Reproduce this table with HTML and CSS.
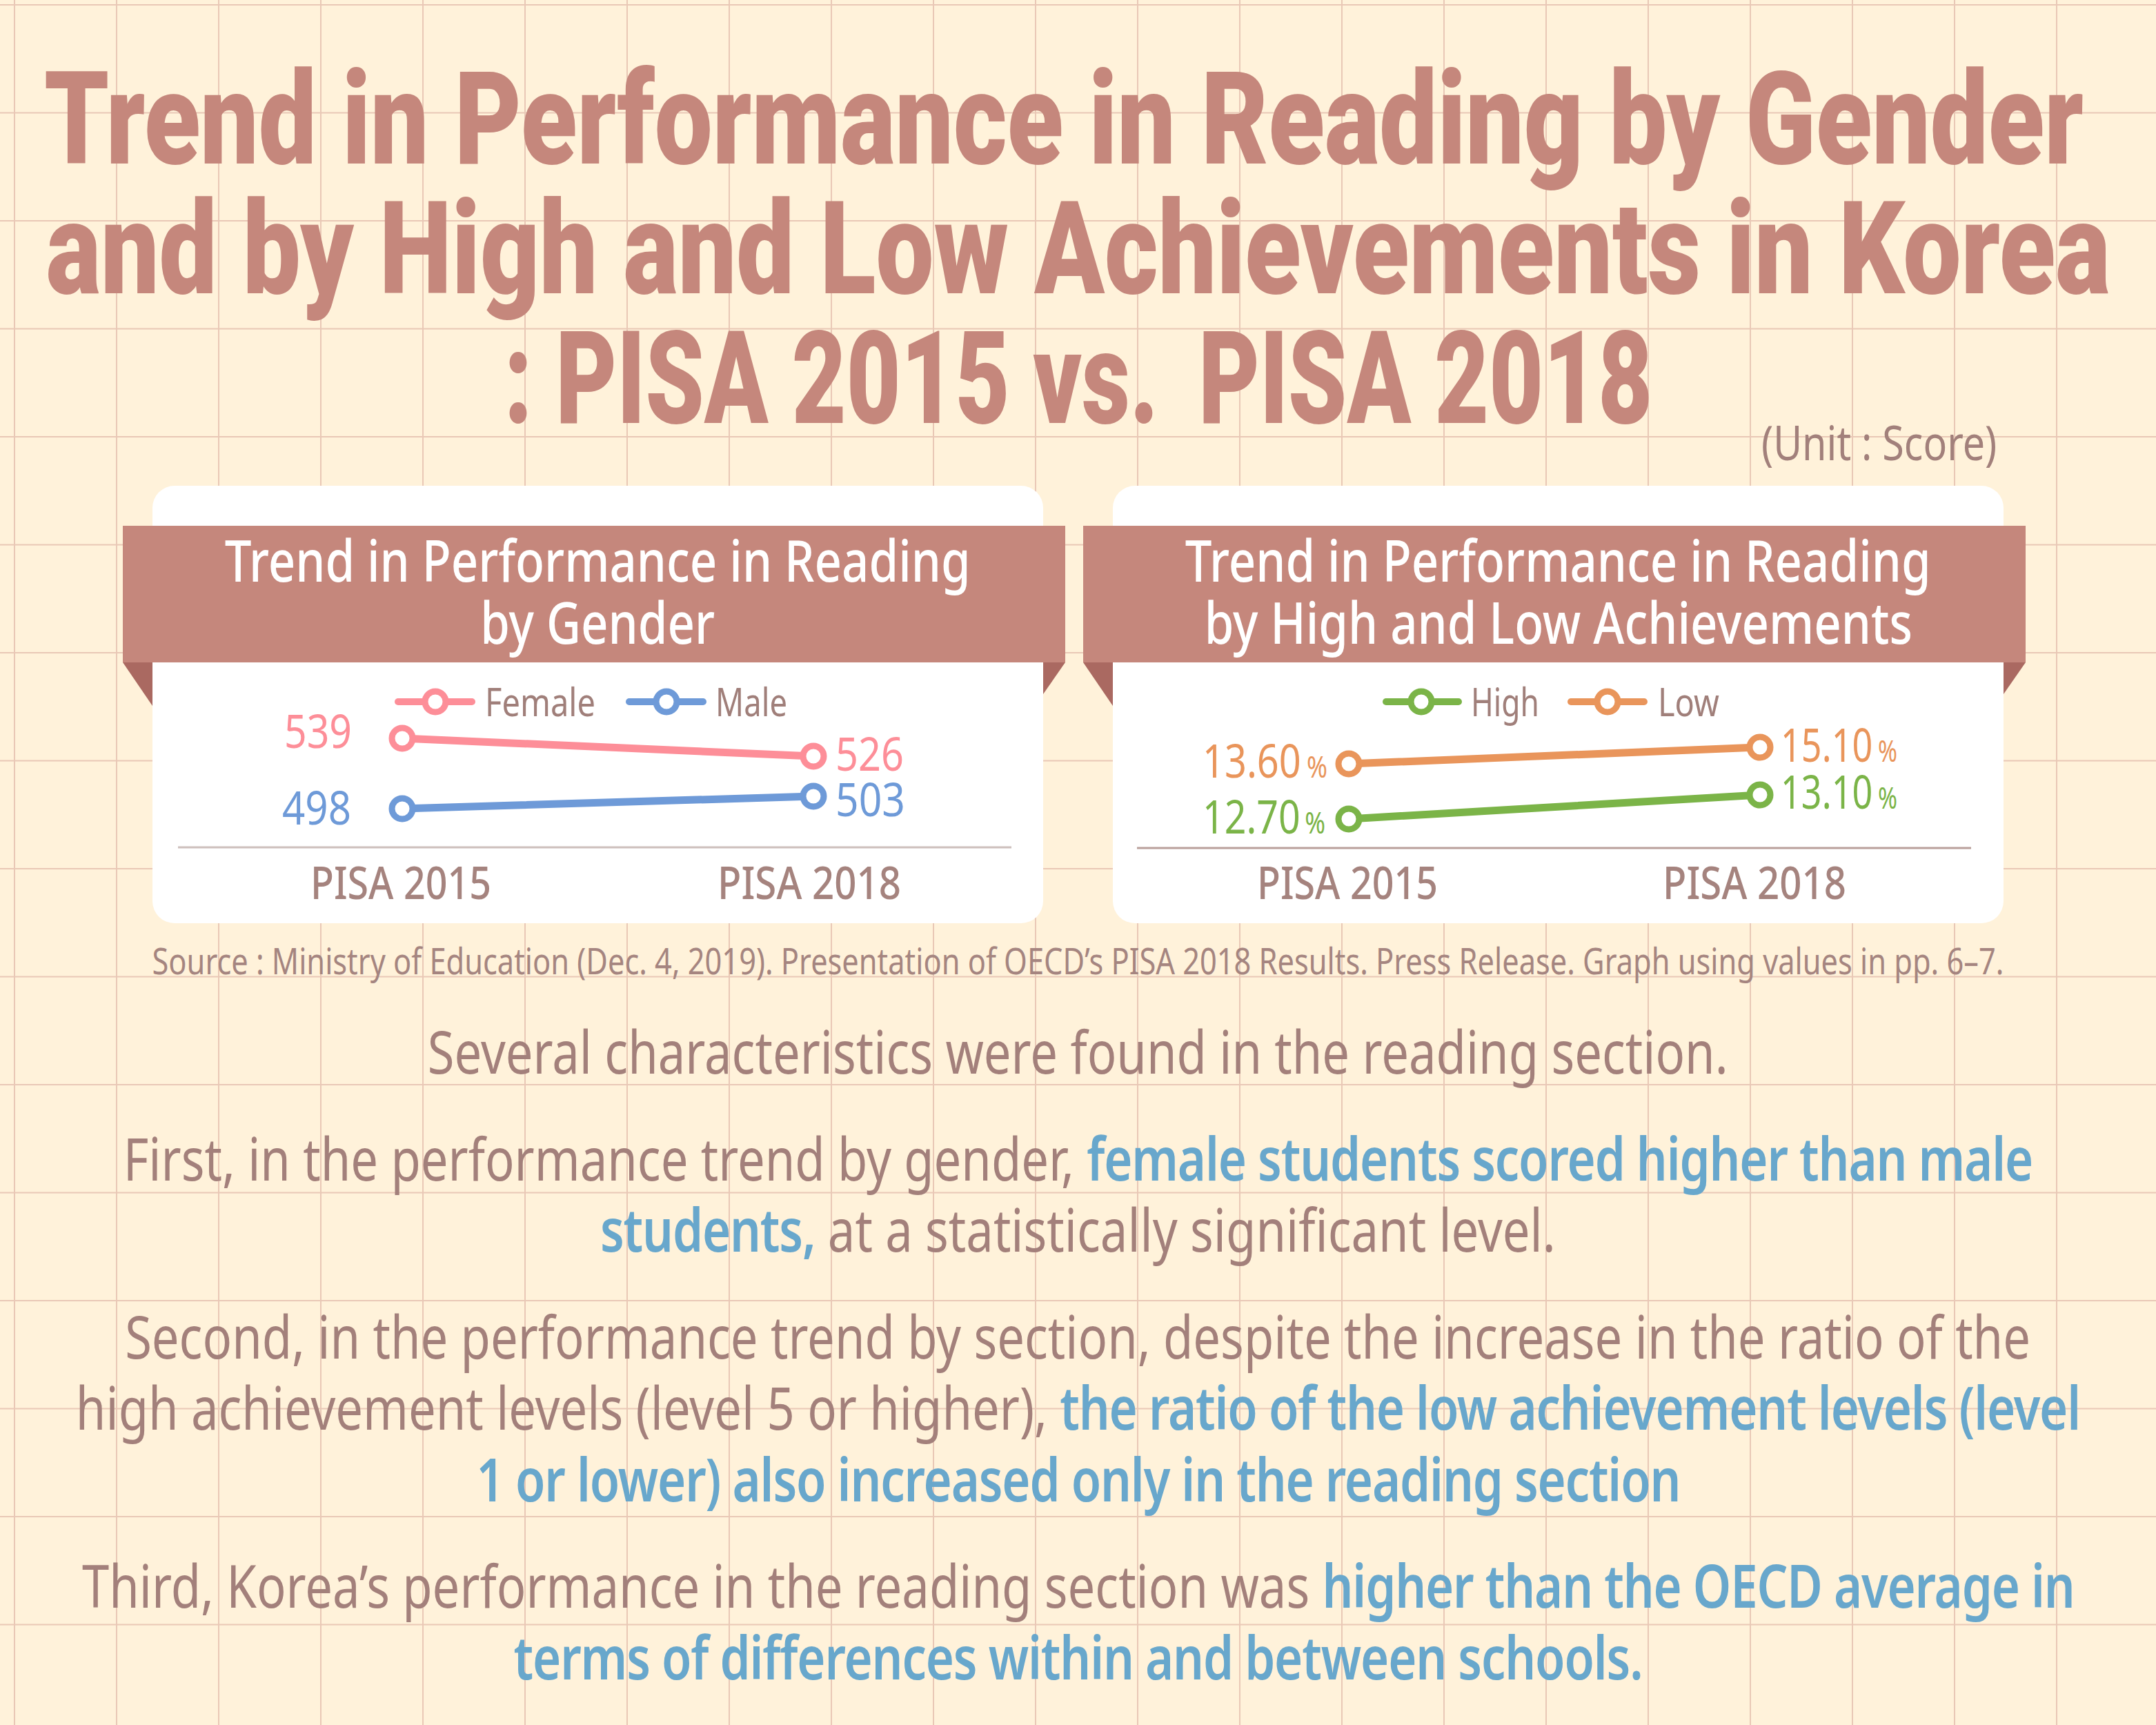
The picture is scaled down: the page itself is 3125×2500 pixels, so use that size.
FILE: index.html
```html
<!DOCTYPE html>
<html lang="en">
<head>
<meta charset="utf-8">
<title>Trend in Performance in Reading by Gender and by High and Low Achievements in Korea</title>
<link rel="stylesheet" href="styles.css">
</head>
<body>
<main class="page">
  <h1 class="title">
    <span class="tl t1"><span class="sq">Trend in Performance in Reading by Gender</span></span>
    <span class="tl t2"><span class="sq">and by High and Low Achievements in Korea</span></span>
    <span class="tl t3"><span class="sq">: PISA 2015 vs.<span class="wide"> </span>PISA 2018</span></span>
  </h1>
  <p class="unit"><span class="sq">(Unit : Score)</span></p>

  <section class="cards">
    <article class="card card-left">
      <header class="banner">
        <h2>
          <span class="ln"><span class="sq">Trend in Performance in Reading</span></span>
          <span class="ln"><span class="sq">by Gender</span></span>
        </h2>
      </header>
      <svg class="chart" width="1291" height="378" viewBox="0 0 1291 378">
        <line class="s-pink" x1="356" y1="57" x2="463" y2="57" stroke-width="10"/>
        <circle class="s-pink dot" cx="410" cy="57" r="15"/>
        <text class="legend" x="482" y="78" textLength="160" lengthAdjust="spacingAndGlyphs">Female</text>
        <line class="s-blue" x1="691" y1="57" x2="798" y2="57" stroke-width="10"/>
        <circle class="s-blue dot" cx="745" cy="57" r="15"/>
        <text class="legend" x="816" y="78" textLength="104" lengthAdjust="spacingAndGlyphs">Male</text>

        <line class="axis axis-grey" x1="37" y1="268" x2="1245" y2="268"/>

        <line class="s-pink" x1="362" y1="110" x2="958" y2="136" stroke-width="11"/>
        <circle class="s-pink dot" cx="362" cy="110" r="15"/>
        <circle class="s-pink dot" cx="958" cy="136" r="15"/>
        <line class="s-blue" x1="362" y1="212" x2="958" y2="194" stroke-width="11"/>
        <circle class="s-blue dot" cx="362" cy="212" r="15"/>
        <circle class="s-blue dot" cx="958" cy="194" r="15"/>

        <text class="val f-pink" x="191" y="124" textLength="98" lengthAdjust="spacingAndGlyphs">539</text>
        <text class="val f-pink" x="990" y="157" textLength="99" lengthAdjust="spacingAndGlyphs">526</text>
        <text class="val f-blue" x="188" y="235" textLength="100" lengthAdjust="spacingAndGlyphs">498</text>
        <text class="val f-blue" x="990" y="223" textLength="101" lengthAdjust="spacingAndGlyphs">503</text>

        <text class="xlab" x="229" y="343" textLength="262" lengthAdjust="spacingAndGlyphs">PISA 2015</text>
        <text class="xlab" x="819" y="343" textLength="266" lengthAdjust="spacingAndGlyphs">PISA 2018</text>
      </svg>
    </article>

    <article class="card card-right">
      <header class="banner">
        <h2>
          <span class="ln"><span class="sq">Trend in Performance in Reading</span></span>
          <span class="ln"><span class="sq">by High and Low Achievements</span></span>
        </h2>
      </header>
      <svg class="chart" width="1291" height="378" viewBox="0 0 1291 378">
        <line class="s-green" x1="396" y1="57" x2="501" y2="57" stroke-width="10"/>
        <circle class="s-green dot" cx="447" cy="57" r="15"/>
        <text class="legend" x="519" y="78" textLength="99" lengthAdjust="spacingAndGlyphs">High</text>
        <line class="s-orange" x1="664" y1="57" x2="770" y2="57" stroke-width="10"/>
        <circle class="s-orange dot" cx="717" cy="57" r="15"/>
        <text class="legend" x="790" y="78" textLength="89" lengthAdjust="spacingAndGlyphs">Low</text>

        <line class="axis axis-brown" x1="35" y1="269" x2="1244" y2="269"/>

        <line class="s-orange" x1="342" y1="147" x2="938" y2="123" stroke-width="11"/>
        <circle class="s-orange dot" cx="342" cy="147" r="15"/>
        <circle class="s-orange dot" cx="938" cy="123" r="15"/>
        <line class="s-green" x1="342" y1="227" x2="938" y2="192" stroke-width="11"/>
        <circle class="s-green dot" cx="342" cy="227" r="15"/>
        <circle class="s-green dot" cx="938" cy="192" r="15"/>

        <text class="val f-orange" x="130" y="167" textLength="181" lengthAdjust="spacingAndGlyphs">13.60<tspan class="pct" dx="10">%</tspan></text>
        <text class="val f-green" x="130" y="248" textLength="178" lengthAdjust="spacingAndGlyphs">12.70<tspan class="pct" dx="8">%</tspan></text>
        <text class="val f-orange" x="968" y="144" textLength="169" lengthAdjust="spacingAndGlyphs">15.10<tspan class="pct" dx="10">%</tspan></text>
        <text class="val f-green" x="968" y="212" textLength="169" lengthAdjust="spacingAndGlyphs">13.10<tspan class="pct" dx="10">%</tspan></text>

        <text class="xlab" x="209" y="343" textLength="262" lengthAdjust="spacingAndGlyphs">PISA 2015</text>
        <text class="xlab" x="797" y="343" textLength="266" lengthAdjust="spacingAndGlyphs">PISA 2018</text>
      </svg>
    </article>
  </section>

  <p class="source"><span class="ln"><span class="sq">Source : Ministry of Education (Dec. 4, 2019). Presentation of OECD’s PISA 2018 Results. Press Release. Graph using values in pp. 6–7.</span></span></p>

  <div class="text">
    <p><span class="ln"><span class="sq">Several characteristics were found in the reading section.</span></span></p>
    <p>
      <span class="ln"><span class="sq">First, in the performance trend by gender, <span class="hl">female students scored higher than male</span></span></span>
      <span class="ln"><span class="sq"><span class="hl">students,</span> at a statistically significant level.</span></span>
    </p>
    <p>
      <span class="ln"><span class="sq">Second, in the performance trend by section, despite the increase in the ratio of the</span></span>
      <span class="ln"><span class="sq">high achievement levels (level 5 or higher), <span class="hl">the ratio of the low achievement levels (level</span></span></span>
      <span class="ln"><span class="sq"><span class="hl">1 or lower) also increased only in the reading section</span></span></span>
    </p>
    <p>
      <span class="ln"><span class="sq">Third, Korea’s performance in the reading section was <span class="hl">higher than the OECD average in</span></span></span>
      <span class="ln"><span class="sq"><span class="hl">terms of differences within and between schools.</span></span></span>
    </p>
  </div>
</main>
</body>
</html>
```

FILE: styles.css
```css
html, body {
  margin: 0;
  padding: 0;
}

body {
  width: 3125px;
  height: 2500px;
  overflow: hidden;
  background-color: #fff2da;
  background-image:
    linear-gradient(to right, #e9c8b6 0, #e9c8b6 2px, transparent 2px),
    linear-gradient(to bottom, #e9c8b6 0, #e9c8b6 2px, transparent 2px);
  background-size: 148px 156.5px;
  background-position: 20px 6px;
  font-family: "Noto Sans", "DejaVu Sans", sans-serif;
}

.page {
  padding-top: 79px;
}

/* generic line helpers */
.tl, .ln {
  display: flex;
  justify-content: center;
  white-space: nowrap;
}

.sq {
  display: inline-block;
  white-space: nowrap;
  transform-origin: center;
}

/* title */
.title {
  margin: 0;
  font-family: Roboto, "Liberation Sans", sans-serif;
  font-weight: 900;
  font-size: 188px;
  line-height: 188px;
  color: #c5877c;
  letter-spacing: 0;
}

.title .sq {
  transform: scaleX(0.795);
}

.title .t3 .sq {
  transform: scaleX(0.725);
}

.t1 {
  padding-right: 40px;
}

.wide {
  display: inline-block;
  width: 80px;
}

/* unit */
.unit {
  margin: -38px 0 0;
  padding-right: 231px;
  display: flex;
  justify-content: flex-end;
  font-size: 70px;
  line-height: 70px;
  color: #a2807b;
}

.unit .sq {
  transform-origin: right center;
  transform: scaleX(0.82);
}

/* cards */
.cards {
  margin-top: 29px;
  display: flex;
  justify-content: center;
  gap: 101px;
}

.card {
  width: 1291px;
  height: 634px;
  background: #ffffff;
  border-radius: 32px;
  display: flex;
  flex-direction: column;
}

.banner {
  position: relative;
  height: 198px;
  box-sizing: border-box;
  margin: 58px -32px 0 -43px;
  padding: 4px 32px 14px 43px;
  background: #c5877c;
  color: #ffffff;
}

.banner::before {
  content: "";
  position: absolute;
  left: 0;
  top: 100%;
  width: 0;
  height: 0;
  border-top: 63px solid #aa6961;
  border-left: 43px solid transparent;
}

.banner::after {
  content: "";
  position: absolute;
  right: 0;
  top: 100%;
  width: 0;
  height: 0;
  border-top: 46px solid #aa6961;
  border-right: 32px solid transparent;
}

.banner h2 {
  margin: 0;
  font-weight: 500;
  font-size: 84px;
  line-height: 90px;
}

.banner .sq {
  transform: scaleX(0.82);
}

.chart {
  display: block;
  flex-shrink: 0;
}

.chart text {
  font-family: "Noto Sans", "DejaVu Sans", sans-serif;
}

.chart line {
  stroke-linecap: round;
}

.dot {
  fill: #ffffff;
  stroke-width: 9;
}

.s-pink { stroke: #fd8e98; }
.s-blue { stroke: #6e9ad8; }
.s-green { stroke: #7bb448; }
.s-orange { stroke: #e9955b; }

.f-pink { fill: #fd8e98; }
.f-blue { fill: #6e9ad8; }
.f-green { fill: #7bb448; }
.f-orange { fill: #e9955b; }

.legend {
  font-size: 56px;
  fill: #a07f7a;
}

.val {
  font-size: 68px;
}

.pct {
  font-size: 44px;
}

.xlab {
  font-size: 66px;
  font-weight: 500;
  fill: #a5837e;
}

.axis {
  stroke-width: 3;
}

.chart .axis {
  stroke-linecap: butt;
}

.axis-grey { stroke: #cdbfbc; }
.axis-brown { stroke: #b99f9b; }

/* source */
.source {
  margin: 24px 0 0;
  font-size: 53px;
  line-height: 60px;
  color: #a58580;
}

.source .sq {
  transform: scaleX(0.818);
}

/* body text */
.text {
  margin-top: 49px;
  display: flex;
  flex-direction: column;
  gap: 51px;
}

.text p {
  margin: 0;
  font-size: 86px;
  line-height: 103.5px;
  color: #a3807b;
}

.text .sq {
  transform: scaleX(0.82);
}

.hl {
  color: #68a7cc;
  font-weight: 600;
  letter-spacing: -1.4px;
}
```
